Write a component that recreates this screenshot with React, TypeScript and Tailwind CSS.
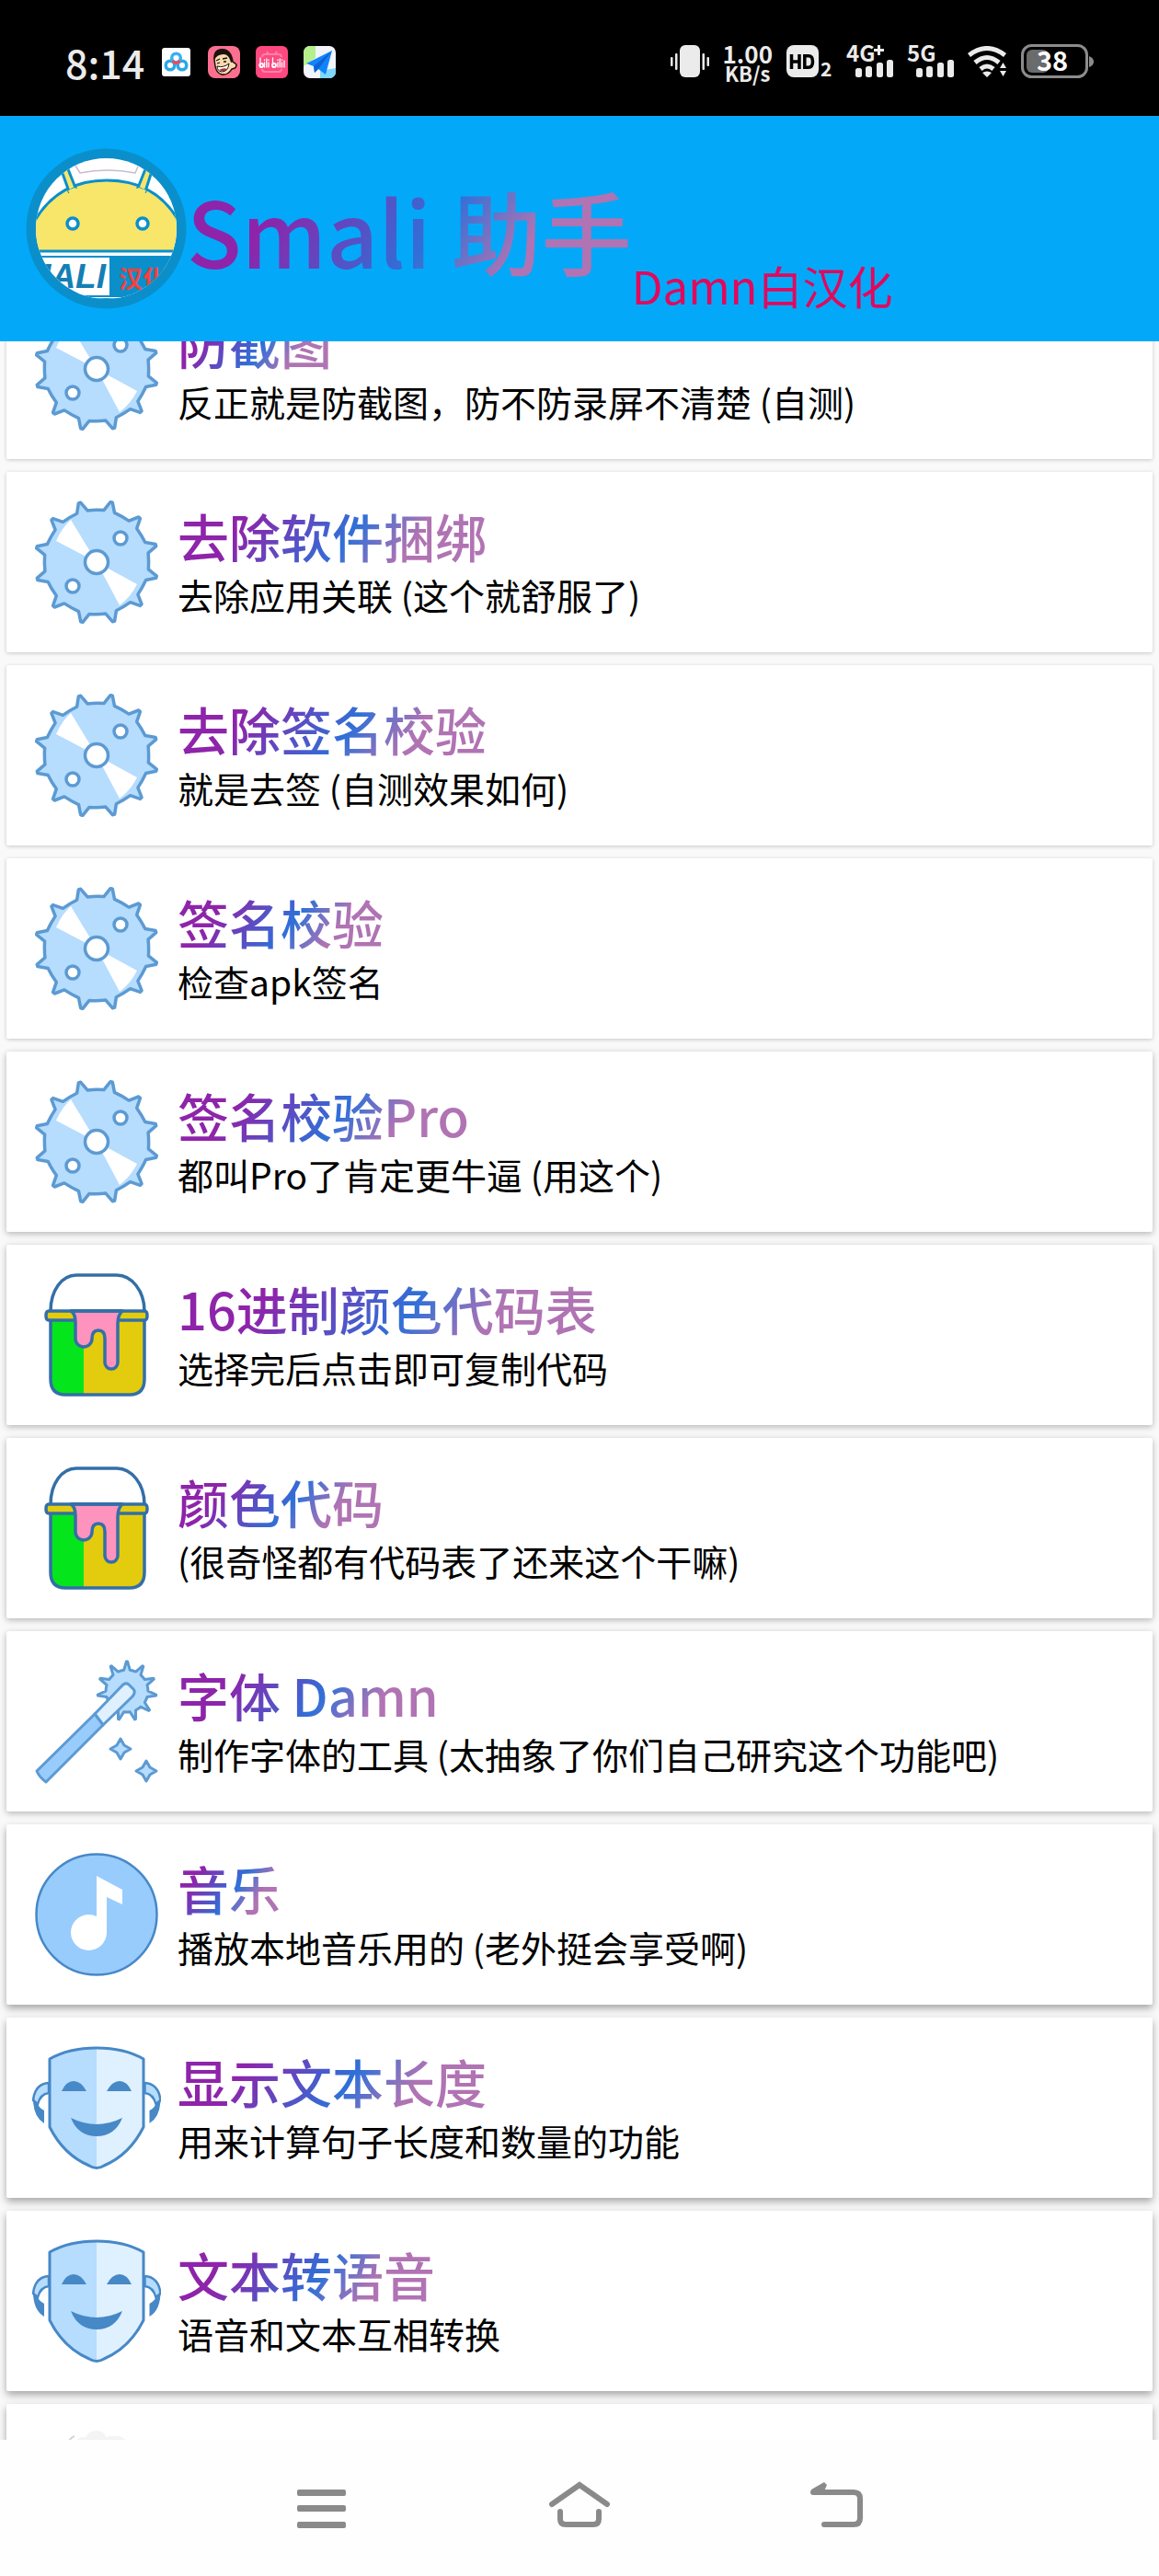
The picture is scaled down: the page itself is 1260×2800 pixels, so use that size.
import React from "react";

const SKY = "#b6dcfe";
const PALE = "#dff0fe";
const MID = "#98ccfd";
const LINE = "#5c9ad2";
const DARK = "#4788c7";

const polar = (cx: number, cy: number, r: number, deg: number) => {
  const a = (deg * Math.PI) / 180;
  return `${(cx + r * Math.cos(a)).toFixed(1)} ${(cy + r * Math.sin(a)).toFixed(1)}`;
};

function spikes(cx: number, cy: number, count: number, start: number, tip: number, base: number, half: number) {
  const step = 360 / count;
  let d = "";
  for (let i = 0; i < count; i++) {
    const a = start + i * step;
    d += `${i ? "L" : "M"}${polar(cx, cy, base, a - half)}L${polar(cx, cy, tip, a - 1)}L${polar(cx, cy, tip, a + 1)}L${polar(cx, cy, base, a + half)}`;
    d += `Q${polar(cx, cy, base, a + step / 2)} ${polar(cx, cy, base, a + step - half)}`;
  }
  return d + "Z";
}

const SAW = spikes(70, 70, 12, -76, 67, 57, 6);
const BURST = spikes(103, 37, 11, -90, 32, 23, 8);

function SawIcon() {
  return (
    <svg viewBox="0 0 140 140" className="size-[140px] shrink-0" aria-hidden="true">
      <path d={SAW} fill={SKY} stroke={LINE} strokeWidth="3.5" strokeLinejoin="round" />
      <path d="M70 70 26 47Q32 33 42 24ZM70 70 114 94Q107 108 95 117Z" fill="#fff" />
      <g fill="#fff" stroke={LINE} strokeWidth="3.5">
        <circle cx="70" cy="70" r="12.5" />
        <circle cx="96" cy="44" r="7" />
        <circle cx="44" cy="96" r="7" />
      </g>
    </svg>
  );
}

function BucketIcon() {
  return (
    <svg viewBox="0 0 140 140" className="size-[140px] shrink-0" aria-hidden="true">
      <path d="M20 54H56V135H36Q20 134 20 118Z" fill="#05e51c" />
      <path d="M56 54H122V118Q122 134 106 135H56Z" fill="#e3cc0d" />
      <g fill="none" stroke="#336fa8" strokeWidth="3.5" strokeLinejoin="round">
        <path d="M20 44C20 22 32 5 48 5H92C108 5 122 22 122 44" />
        <path d="M20 54V118Q20 135 36 135H106Q122 135 122 118V54" />
        <path d="M18 44H122Q125 44 125 49T122 54H18Q15 54 15 49T18 44Z" fill="#e3cc0d" />
        <path
          d="M42 44Q47 47 47 56V74A9 9 0 0 0 65 74Q65 65 72 65T79 74V100A7 7 0 0 0 93 100V58Q93 48 98 44Z"
          fill="#fe93bd"
        />
        <path d="M42 44H98" />
      </g>
    </svg>
  );
}

function WandIcon() {
  return (
    <svg viewBox="0 0 140 140" className="size-[140px] shrink-0" aria-hidden="true">
      <g stroke={LINE} strokeWidth="3" strokeLinejoin="round">
        <path d={BURST} fill={SKY} />
        <path d="M68 62 97 32Q101 27 105 30L110 35Q113 38 109 43L77 74Z" fill={PALE} />
        <path d="M68 62 5 124Q8 131 15 136L77 74Z" fill={MID} />
        <path d="M96 89 100 96 107 100 100 104 96 111 92 104 85 100 92 96Z" fill={SKY} />
        <path d="M124 113 128 120 135 124 128 128 124 135 120 128 113 124 120 120Z" fill={SKY} />
      </g>
    </svg>
  );
}

function MusicIcon() {
  return (
    <svg viewBox="0 0 140 140" className="size-[140px] shrink-0" aria-hidden="true">
      <circle cx="70" cy="70" r="65.5" fill={MID} stroke={DARK} strokeWidth="2.5" />
      <path d="M70 28 98 43V59L81 51V90A19.5 19.5 0 1 1 61 70Q66 70 70 72Z" fill="#fff" />
    </svg>
  );
}

function MaskIcon() {
  return (
    <svg viewBox="0 0 140 140" className="size-[140px] shrink-0" aria-hidden="true">
      {[false, true].map((flip) => (
        <g key={String(flip)} transform={flip ? "translate(140.5 0) scale(-1 1)" : undefined}>
          <path d="M18 43Q3 44 1 62L6 66Q9 55 18 54Z" fill={SKY} stroke={DARK} strokeWidth="2.5" />
          <path d="M1 60Q1 80 13 87V73Q7 70 5 64Z" fill={DARK} />
        </g>
      ))}
      <path d="M70 5Q40 5 19 17V91Q34 121 62 133Q66 136 70 136Z" fill={SKY} />
      <path d="M70 5Q100 5 121 17V91Q106 121 78 133Q74 136 70 136Z" fill={PALE} />
      <path
        d="M70 5Q40 5 19 17V91Q34 121 62 133Q70 138 78 133Q106 121 121 91V17Q100 5 70 5Z"
        fill="none"
        stroke={DARK}
        strokeWidth="3"
        strokeLinejoin="round"
      />
      <path
        d="M32 52Q37 41 45 41T59 52ZM81 52Q87 41 95 41T108 52ZM42 81Q70 95 98 81Q90 101 70 101T42 81Z"
        fill={DARK}
      />
    </svg>
  );
}

function CloudIcon() {
  return (
    <svg viewBox="0 0 140 140" className="size-[140px] shrink-0" aria-hidden="true">
      <path d="M48 14Q48 8 58 8Q62 1 70 1T80 8Q100 4 102 14Z" fill="#f4f4f4" />
      <path d="M39 14Q41 9 46 7" fill="none" stroke="#d4d4d4" strokeWidth="2" />
    </svg>
  );
}

function AppLogo() {
  return (
    <svg viewBox="0 0 175 175" className="size-[175px] shrink-0" role="img" aria-label="Smali">
      <defs>
        <clipPath id="disc">
          <circle cx="87.5" cy="87.5" r="76.5" />
        </clipPath>
      </defs>
      <circle cx="87.5" cy="87.5" r="87" fill="#0b8fcb" />
      <g clipPath="url(#disc)">
        <rect width="175" height="175" fill="#fff" />
        <path d="M54 19 59 27Q89 21 119 27L122 20M16 51 28 39" fill="none" stroke="#c9bccd" strokeWidth="1.5" />
        <g stroke="#0b8fcb" strokeWidth="3">
          <path d="M4 112V90C20 55 48 35 88 35S156 55 172 90V112Z" fill="#f7e66a" />
          <path d="M38 22 47 47 54 43 44 18ZM138 22 130 47 122 43 132 18Z" fill="#f7e66a" />
        </g>
        <path d="M46 46 53 43 60 46 50 54ZM131 46 123 43 116 46 126 54Z" fill="#f7e66a" />
        <g fill="#fff" stroke="#0b8fcb" strokeWidth="3.5">
          <circle cx="51" cy="82" r="6" />
          <circle cx="127" cy="82" r="6" />
        </g>
        <rect y="117" width="175" height="58" fill="#0b8fcb" />
        <path d="M0 119H91V160H0ZM50 162H104V163H50Z" fill="#fff" />
        <text x="87" y="152" textAnchor="end" fontSize="37" fontStyle="italic" fontWeight="700" fill="#157fb4" fontFamily="Liberation Sans, sans-serif">
          SMALI
        </text>
        <text x="101" y="152" fontSize="26" fontWeight="700" fill="#f8403a" fontFamily="Noto Sans CJK SC, sans-serif">
          汉化
        </text>
      </g>
    </svg>
  );
}

function SignalIcon({ label, plus }: { label: string; plus?: boolean }) {
  return (
    <svg viewBox="0 0 51 36" className="h-9 w-[51px] overflow-visible" role="img" aria-label={plus ? `${label}+` : label} fill="#ebebeb">
      <text x="0" y="18" fontSize="24" fontWeight="700" fontFamily="Noto Sans CJK SC, sans-serif">
        {label}
      </text>
      {plus && <path d="M30 5.500H41M35.500 0V11" stroke="#ebebeb" strokeWidth="3" />}
      <rect x="10" y="25" width="7" height="10" rx="2.5" />
      <rect x="21" y="23" width="7" height="12" rx="2.5" />
      <rect x="33" y="19" width="7" height="16" rx="2.5" />
      <rect x="44" y="16" width="7" height="19" rx="2.5" />
    </svg>
  );
}

function StatusBar() {
  return (
    <div className="flex shrink-0 items-center justify-between bg-black px-[71px] pt-[37px] pb-[29px] text-[#ebebeb]">
      <div className="flex items-center gap-[17px]">
        <time className="text-[43px] leading-[60px] font-medium">8:14</time>
        <svg viewBox="0 0 35 35" className="size-[35px]" aria-hidden="true">
          <rect x="2" y="2" width="31" height="31" rx="3" fill="#fff" />
          <g fill="none" strokeWidth="3.5">
            <circle cx="11" cy="21" r="4.8" stroke="#2aa8e8" />
            <circle cx="24" cy="21" r="4.8" stroke="#2aa8e8" />
            <circle cx="17.5" cy="13" r="4.8" stroke="#3cb0ee" />
            <path d="M13.500 16Q17.500 21 21.500 16" stroke="#ee4a5e" />
          </g>
        </svg>
        <svg viewBox="0 0 35 35" className="size-[35px]" aria-hidden="true">
          <rect width="35" height="35" rx="8" fill="#fd6f8e" />
          <path d="M7 15Q6 4 16 4Q25 4 27 17L31 20Q31 25 26 25Q22 32 15 31Q9 29 8 22Z" fill="#f8dcae" stroke="#1c1210" strokeWidth="1.5" />
          <path d="M7 15Q5 3 16 3Q26 4 27 17L25 18Q23 9 17 9Q10 9 7 15Z" fill="#1c1210" />
          <path d="M10 22Q17 24 23 19Q22 28 15 28Q10 27 10 22Z" fill="#fff" stroke="#1c1210" />
          <path d="M12 26Q17 23 21 25Q18 29 12 26Z" fill="#a83238" />
          <path d="M9 16 13 14M16 14 21 13M10 19 13 18M17 17 20 17" stroke="#1c1210" strokeWidth="1.3" />
        </svg>
        <svg viewBox="0 0 35 35" className="size-[35px]" aria-hidden="true">
          <rect width="35" height="35" rx="6" fill="#fd4880" />
          <path d="M12 6 14 9M23 6 21 9M7 12Q7 9 10 9H25Q28 9 28 12M7 25Q7 28 10 28H25Q28 28 28 25" fill="none" stroke="#fe82a6" strokeWidth="2" />
          <g fill="none" stroke="#fff" strokeWidth="1.8" strokeLinecap="round">
            <path d="M5 13V23M18.500 13V23M9.500 18V23M11.800 14V23M14 18V23M24 18V23M26.300 14V23M28.500 18V23M31 16V23M9.500 15V15.500M14 15V15.500M24 15V15.500M28.500 15V15.500" strokeWidth="1.3" />
            <circle cx="6.200" cy="21" r="2" />
            <circle cx="20" cy="21" r="2" />
          </g>
        </svg>
        <svg viewBox="0 0 35 35" className="size-[35px]" aria-hidden="true">
          <defs>
            <clipPath id="map">
              <rect width="35" height="35" rx="7" />
            </clipPath>
          </defs>
          <g clipPath="url(#map)">
            <rect width="35" height="35" fill="#f2f5fb" />
            <path d="M0 0H13V13L0 22Z" fill="#b5f08c" />
            <path d="M18 27 35 24V35H18Z" fill="#7fd8fb" />
            <path d="M31 5 3 19 11 22 12 29 16 25 24 31Z" fill="#1284fb" />
            <path d="M31 5 11 22 12 29 16 25Z" fill="#0c63d4" />
          </g>
        </svg>
      </div>
      <div className="flex items-center gap-[15px]">
        <svg viewBox="0 0 42 36" className="h-9 w-[42px]" role="img" aria-label="振动" fill="#ebebeb">
          <rect x="10" y="0" width="22" height="35" rx="6" />
          <rect x="5" y="9" width="2.500" height="18" rx="1" />
          <rect x="0" y="13" width="2.500" height="10" rx="1" />
          <rect x="34.500" y="9" width="2.500" height="18" rx="1" />
          <rect x="39.500" y="13" width="2.500" height="10" rx="1" />
        </svg>
        <div className="flex flex-col items-center font-bold">
          <span className="text-[26px] leading-[23px]">1.00</span>
          <span className="text-[22px] leading-[20px]">KB/s</span>
        </div>
        <svg viewBox="0 0 50 36" className="h-9 w-[50px] overflow-visible" role="img" aria-label="HD2" fill="#ebebeb">
          <rect width="35" height="35" rx="8" />
          <path d="M5.500 10V26M14 10V26M5.500 18H14" stroke="#000" strokeWidth="3.500" />
          <path d="M19.800 11.800H24Q28.500 11.800 28.500 18T24 24.200H19.800Z" fill="none" stroke="#000" strokeWidth="3.500" />
          <text x="37" y="34" fontSize="21" fontWeight="700" fontFamily="Noto Sans CJK SC, sans-serif">
            2
          </text>
        </svg>
        <SignalIcon label="4G" plus />
        <SignalIcon label="5G" />
        <svg viewBox="0 0 43 34" className="h-[34px] w-[43px]" role="img" aria-label="Wi-Fi">
          <g fill="none" stroke="#ebebeb" strokeWidth="5">
            <path d="M1.500 10Q21 -5 40.500 10" />
            <path d="M8 18Q21 7 34 18" />
            <path d="M14 25Q21 19 28 25" />
          </g>
          <path d="M16 29Q21 26 26 29L21 34ZM35 24 38.500 18 42 24ZM35 27 38.500 33 42 27Z" fill="#ebebeb" />
        </svg>
        <svg viewBox="0 0 79 38" className="h-[38px] w-[79px]" role="img" aria-label="电量 38">
          <rect x="1.500" y="1.500" width="70" height="34" rx="10" fill="none" stroke="#8c8c8c" strokeWidth="3" />
          <rect x="6" y="6" width="24" height="25" rx="6" fill="#6b6b6b" />
          <path d="M74 13Q79 15 79 19T74 25Z" fill="#8c8c8c" />
          <text x="17" y="29" fontSize="29" fontWeight="700" fill="#fff" fontFamily="Noto Sans CJK SC, sans-serif">
            38
          </text>
        </svg>
      </div>
    </div>
  );
}

const icons = { saw: SawIcon, bucket: BucketIcon, wand: WandIcon, music: MusicIcon, mask: MaskIcon, cloud: CloudIcon };

const soft = "shadow-[0_1px_4px_rgba(0,0,0,0.20)]";
const medium = "shadow-[0_2px_7px_rgba(0,0,0,0.28)]";
const strong = "shadow-[0_4px_9px_rgba(0,0,0,0.34)]";

const items: { icon: keyof typeof icons; title?: string; note?: string; shadow: string }[] = [
  { icon: "saw", title: "防截图", note: "反正就是防截图，防不防录屏不清楚 (自测)", shadow: soft },
  { icon: "saw", title: "去除软件捆绑", note: "去除应用关联 (这个就舒服了)", shadow: soft },
  { icon: "saw", title: "去除签名校验", note: "就是去签 (自测效果如何)", shadow: soft },
  { icon: "saw", title: "签名校验", note: "检查apk签名", shadow: soft },
  { icon: "saw", title: "签名校验Pro", note: "都叫Pro了肯定更牛逼 (用这个)", shadow: medium },
  { icon: "bucket", title: "16进制颜色代码表", note: "选择完后点击即可复制代码", shadow: medium },
  { icon: "bucket", title: "颜色代码", note: "(很奇怪都有代码表了还来这个干嘛)", shadow: medium },
  { icon: "wand", title: "字体 Damn", note: "制作字体的工具 (太抽象了你们自己研究这个功能吧)", shadow: medium },
  { icon: "music", title: "音乐", note: "播放本地音乐用的 (老外挺会享受啊)", shadow: strong },
  { icon: "mask", title: "显示文本长度", note: "用来计算句子长度和数量的功能", shadow: strong },
  { icon: "mask", title: "文本转语音", note: "语音和文本互相转换", shadow: strong },
  { icon: "cloud", shadow: strong },
];

const gradient =
  "bg-[linear-gradient(125deg,#8e24aa_22%,#2f70d8_55%,#b073b3_74%)] bg-clip-text text-transparent";

export default function App() {
  return (
    <div className="flex h-screen flex-col overflow-hidden bg-[#f9f9f9] font-['Noto_Sans_CJK_SC',sans-serif] text-black">
      <StatusBar />
      <header className="flex shrink-0 items-center bg-[#03a9f8] px-7 py-[35px]">
        <AppLogo />
        <h1 className={`text-[98px] leading-[140px] font-medium ${gradient}`}>Smali 助手</h1>
        <p className="-mb-1 self-end text-[49px] leading-[60px] text-[#e2085c]">Damn白汉化</p>
      </header>
      <main className="min-h-0 flex-1 overflow-hidden">
        <ul className="-mt-[68px] flex flex-col gap-3.5 px-[7px]">
          {items.map((item, i) => {
            const Icon = icons[item.icon];
            return (
              <li key={i}>
                <button type="button" className={`flex w-full items-center gap-[18px] rounded-xs bg-white p-7 text-left ${item.shadow}`}>
                  <Icon />
                  {item.title && (
                    <span className="flex flex-col items-start">
                      <span className={`text-[56px] leading-[70px] font-medium ${gradient}`}>{item.title}</span>
                      <span className="text-[39px] leading-[58px]">{item.note}</span>
                    </span>
                  )}
                </button>
              </li>
            );
          })}
        </ul>
      </main>
      <nav className="shrink-0 bg-[#fefefe] py-[34px]">
        <div className="mx-auto grid w-2/3 grid-cols-3">
          <button type="button" aria-label="最近任务" className="flex justify-center">
            <svg viewBox="0 0 80 80" className="size-20" fill="#8a8a8a" aria-hidden="true">
              <rect x="13" y="20" width="53" height="7" rx="2" />
              <rect x="13" y="37" width="53" height="7" rx="2" />
              <rect x="13" y="55" width="53" height="7" rx="2" />
            </svg>
          </button>
          <button type="button" aria-label="主页" className="flex justify-center">
            <svg viewBox="0 0 80 80" className="size-20" fill="none" stroke="#8a8a8a" strokeWidth="6" aria-hidden="true">
              <path d="M10 36 40 15 70 36" strokeLinecap="round" />
              <path d="M19 44V52Q19 58 25 58H55Q61 58 61 52V44" strokeLinecap="round" />
            </svg>
          </button>
          <button type="button" aria-label="返回" className="flex justify-center">
            <svg viewBox="0 0 80 80" className="size-20" fill="none" stroke="#8a8a8a" strokeWidth="6" aria-hidden="true">
              <path d="M14 23H58Q65 23 65 30V51Q65 58 58 58H26" strokeLinecap="round" />
              <path d="M14 26 12 20 26 12 29 15 25 24Z" fill="#8a8a8a" stroke="none" />
            </svg>
          </button>
        </div>
      </nav>
    </div>
  );
}
